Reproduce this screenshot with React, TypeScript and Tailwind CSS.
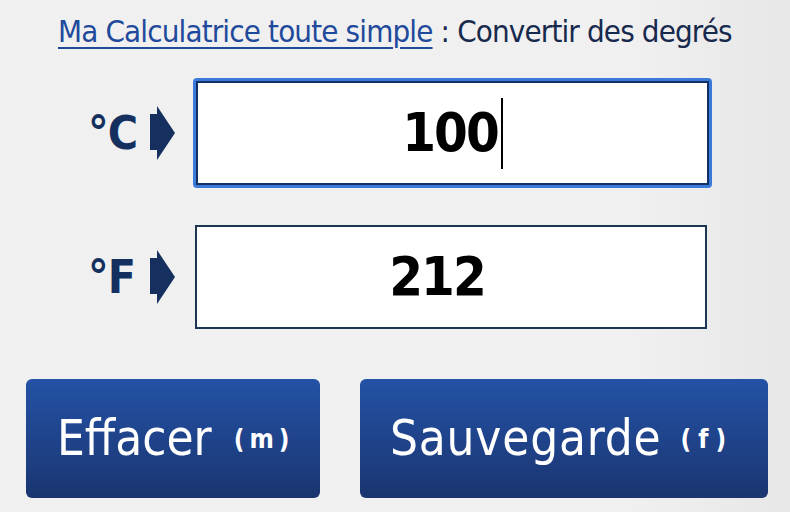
import React from "react";

const font = { fontFamily: '"DejaVu Sans Condensed", "Liberation Sans", sans-serif' };

function Arrow() {
    return (
        <svg width="25" height="54" viewBox="0 0 25 54" className="shrink-0">
            <path d="M0 8 H7 V0 L25 27 L7 54 V44 H0 Z" fill="#15305f" />
        </svg>
    );
}

export default function App() {
    return (
        <div
            className="w-[790px] h-[512px] overflow-hidden flex flex-col bg-[linear-gradient(90deg,#f0f0f0_80%,#e7e7e7)]"
            style={font}
        >
            {/* Title */}
            <div className="pl-[58px] pt-[12px] h-[78px] text-[31px] leading-[38px] tracking-[-0.85px] whitespace-nowrap">
                <span className="text-[#1f4a9c] underline decoration-[2px] underline-offset-[5px]">Ma Calculatrice toute simple</span>
                <span className="text-[#17294d]"> : Convertir des degrés</span>
            </div>

            {/* Celsius */}
            <div className="flex items-center pl-[88px] h-[110px]">
                <span className="w-[62px] text-[46px] leading-none font-bold tracking-[-1px] text-[#15305f]">°C</span>
                <Arrow />
                <div className="ml-[18px] w-[519px] h-[110px] rounded-[4px] border-[3px] border-[#3b7ad9] bg-[#3b7ad9]">
                    <div className="h-full border-2 border-[#123063] bg-white flex items-center justify-center">
                        <span className="text-[54px] leading-none font-bold tracking-[-2px] text-black">100</span>
                        <span className="ml-[3px] w-[2px] h-[71px] bg-black" />
                    </div>
                </div>
            </div>

            {/* Fahrenheit */}
            <div className="flex items-center pl-[88px] h-[104px] mt-[37px]">
                <span className="w-[62px] text-[46px] leading-none font-bold tracking-[-1px] text-[#15305f]">°F</span>
                <Arrow />
                <div className="ml-[20px] w-[512px] h-[104px] border-2 border-[#1b3553] bg-white flex items-center justify-center pr-[28px]">
                    <span className="text-[54px] leading-none font-bold tracking-[-2px] text-black">212</span>
                </div>
            </div>

            {/* Buttons */}
            <div className="flex pl-[26px] gap-[40px] mt-[50px]">
                <button className="w-[294px] h-[119px] rounded-[6px] bg-[linear-gradient(180deg,#2452a6,#1a3570)] text-white flex items-center pl-[31px]">
                    <span className="text-[49px] leading-none">Effacer</span>
                    <span className="ml-[22px] text-[26px] leading-none font-bold tracking-[5px]">(m)</span>
                </button>
                <button className="w-[408px] h-[119px] rounded-[6px] bg-[linear-gradient(180deg,#2452a6,#1a3570)] text-white flex items-center pl-[30px]">
                    <span className="text-[49px] leading-none tracking-[0.8px]">Sauvegarde</span>
                    <span className="ml-[19px] text-[26px] leading-none font-bold tracking-[7px]">(f)</span>
                </button>
            </div>
        </div>
    );
}
